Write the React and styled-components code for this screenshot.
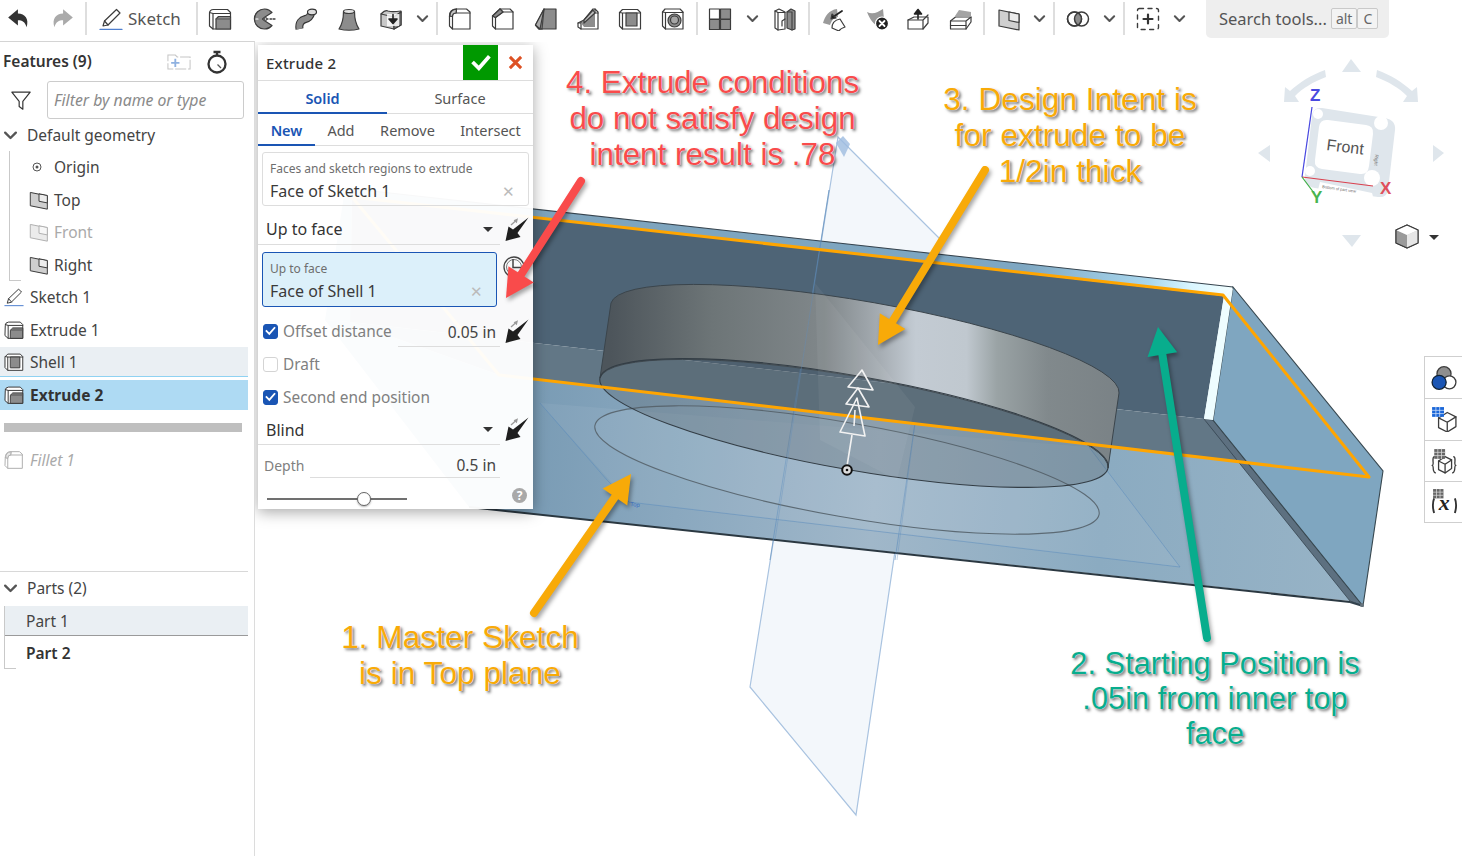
import React from 'react';
import styled, { createGlobalStyle } from 'styled-components';

const Global = createGlobalStyle`
  html, body { margin: 0; padding: 0; background: #fff; }
  body { font-family: "Noto Sans", "Open Sans", sans-serif; color: #3a3a3a; }
  * { box-sizing: border-box; }
`;

const Page = styled.div`
  width: 1462px; height: 856px; display: flex; flex-direction: column; overflow: hidden; background: #fff;
`;
const Toolbar = styled.div`
  height: 42px; flex: none; display: flex; align-items: flex-start; position: relative;
`;
const ToolBtn = styled.div`
  width: ${p => p.$w}px; height: 38px; flex: none; display: flex; align-items: center;
  justify-content: center; padding-right: ${p => p.$pr || 0}px;
`;
const Sep = styled.div`
  width: 2px; height: 33px; margin-top: 2px; background: #dedede; flex: none; margin-left: ${p => p.$ml || 0}px;
`;
const SketchBtn = styled.div`
  width: 109px; height: 38px; flex: none; display: flex; align-items: center; gap: 5px; padding: 0 0 1px 12px;
  font-size: 17px; color: #555;
`;
const Search = styled.div`
  width: 183px; height: 38px; margin-left: 19px; background: #eeeeee; border-radius: 0 0 5px 5px;
  display: flex; align-items: center; padding: 0 0 1px 13px; font-size: 16.5px; color: #555; flex: none; white-space: nowrap;
`;
const Kbd = styled.span`
  height: 21px; padding: 0 4px; border: 1px solid #c9c9c9; background: #f3f3f3; border-radius: 2px;
  font-size: 14px; line-height: 19px; color: #666; margin-left: ${p => p.$ml || 0}px; min-width: 21px; text-align: center;
`;
const Main = styled.div`
  flex: 1; display: flex; min-height: 0;
`;
const Sidebar = styled.aside`
  width: 255px; flex: none; border-right: 1px solid #dcdcdc; border-top: 1px solid #d4d4d4; margin-top: -1px;
  display: flex; flex-direction: column; font-size: 15.5px; background: #fff;
`;
const SideHeader = styled.div`
  height: 39px; display: flex; align-items: center; padding: 0 25px 0 3px; flex: none;
`;
const SideTitle = styled.div`
  font-weight: 600; font-size: 15.5px; color: #333; flex: 1; padding-bottom: 2px;
`;
const FilterRow = styled.div`
  height: 38px; display: flex; align-items: center; flex: none; padding-left: 10px;
`;
const FilterInput = styled.div`
  width: 197px; height: 38px; margin-left: 15px; border: 1px solid #ccc; border-radius: 3px; padding-left: 6px;
  display: flex; align-items: center; font-style: italic; color: #8a8a8a; font-size: 15.8px;
`;
const TreeRow = styled.div`
  width: 248px; height: ${p => p.$h || 32.5}px; display: flex; align-items: center; flex: none;
  padding-left: ${p => p.$pl ?? 4}px; gap: ${p => p.$gap ?? 6}px; padding-bottom: ${p => p.$pb || 0}px;
  background: ${p => p.$bg || 'transparent'};
  color: ${p => p.$color || '#444'};
  font-weight: ${p => p.$weight || 400};
  font-style: ${p => p.$italic ? 'italic' : 'normal'};
  border-bottom: ${p => p.$line ? `1px solid ${p.$line}` : 'none'};
  margin-bottom: ${p => p.$mb || 0}px;
`;
const Guide = styled.div`
  margin-left: ${p => p.$ml}px; border-left: 1px solid #c9c9c9; display: flex; flex-direction: column;
  width: ${p => 248 - p.$ml}px; position: relative;
  &::after { content: ""; position: absolute; left: 0; bottom: 0; width: 11px; height: 1px; background: #c9c9c9; }
`;
const SubRow = styled(TreeRow)`
  width: 100%;
`;
const Rollback = styled.div`
  width: 238px; height: 9px; margin: 13px 0 12px 4px; background: #bfbfbf; flex: none;
`;
const Divider = styled.div`
  width: 248px; height: 1px; background: #d8d8d8; margin-top: 94.5px; flex: none;
`;

const Viewport = styled.main`
  flex: 1; position: relative; overflow: hidden; background: #fff; margin-top: 0;
`;
const Canvas = styled.svg`
  position: absolute; left: 0; top: 0; width: 1207px; height: 814px; display: block;
  z-index: ${p => p.$z || 0}; pointer-events: none;
`;
const Note = styled.div`
  position: absolute; left: ${p => p.$x - 255}px; top: ${p => p.$y - 42}px; transform: translateX(-50%);
  z-index: 4; white-space: pre; text-align: center; font-family: "Liberation Sans", Arial, sans-serif;
  font-size: ${p => p.$fs}px; line-height: ${p => p.$lh || 36}px; color: ${p => p.$c};
  text-shadow: 0 0 1px #fff, 0 0 2px #fff, 2px 2px 3px rgba(0,0,0,.55), 1px 1px 1px rgba(0,0,0,.2);
`;
const Dialog = styled.section`
  position: absolute; left: 3px; top: 3px; width: 275px; height: 464px; z-index: 2;
  background: rgba(255,255,255,.965); box-shadow: 0 3px 14px rgba(0,0,0,.35);
  display: flex; flex-direction: column; font-size: 16px;
`;
const DialogHead = styled.div`
  height: 36px; display: flex; align-items: center; border-bottom: 1px solid #ddd; flex: none;
`;
const DialogTitle = styled.div`
  flex: 1; padding-left: 8px; font-weight: 500; font-size: 15px; color: #333; letter-spacing: .2px;
`;
const Accept = styled.div`
  width: 35px; height: 35px; background: #009900; display: flex; align-items: center; justify-content: center;
`;
const Cancel = styled.div`
  width: 35px; height: 35px; display: flex; align-items: center; justify-content: center;
`;
const Tabs = styled.div`
  height: ${p => p.$h}px; display: flex; border-bottom: 1px solid #ddd; flex: none; font-size: 14.5px;
`;
const Tab = styled.div`
  width: ${p => p.$w}px; flex: none; display: flex; align-items: center; justify-content: center;
  padding-top: 2px;
  color: ${p => p.$on ? '#1a55b4' : '#555'};
  font-weight: ${p => p.$on ? 600 : 400};
  border-bottom: 2px solid ${p => p.$on ? '#1a55b4' : 'transparent'};
  margin-bottom: -1px;
`;
const Field = styled.div`
  width: ${p => p.$w}px; height: ${p => p.$h || 54}px; border-radius: 3px; padding: 8px 8px 0 7px; flex: none; position: relative;
  border: 1px solid ${p => p.$on ? '#1a55b4' : '#ddd'};
  background: ${p => p.$on ? '#dcf0fa' : 'transparent'};
`;
const FieldLabel = styled.div`
  font-size: 12px; line-height: 16px; color: #6e6e6e; white-space: nowrap;
`;
const FieldValue = styled.div`
  display: flex; justify-content: space-between; align-items: center; margin-top: 4px;
  font-size: 16px; line-height: 20px; color: #3a3a3a;
`;
const Clear = styled.span`
  color: #bbb; font-size: 15px; line-height: 1; padding-right: 5px; font-weight: 300;
`;
const FieldWrap = styled.div`
  padding: ${p => p.$pt}px 0 0 4px; display: flex; align-items: flex-start; gap: 4px; flex: none;
`;
const Row = styled.div`
  height: ${p => p.$h}px; display: flex; flex: none; align-items: center; gap: 5px; padding-top: ${p => p.$pt || 0}px;
`;
const RowBody = styled.div`
  width: 242px; height: 100%; display: flex; align-items: center; flex: none; padding: 2px 7px 0 8px;
  border-bottom: ${p => p.$line ? '1px solid #ddd' : 'none'};
  justify-content: space-between; color: #333;
`;
const Caret = styled.span`
  width: 0; height: 0; border-left: 5px solid transparent; border-right: 5px solid transparent; border-top: 5px solid #333;
`;
const CheckBody = styled.div`
  width: 242px; height: 100%; display: flex; align-items: center; flex: none; padding-left: 5px; gap: 5px; color: #808080;
  font-size: 15.4px; white-space: nowrap; padding-top: 1px;
`;
const DepthBody = styled.div`
  width: 242px; height: 100%; display: flex; align-items: center; flex: none;
`;
const Box = styled.span`
  width: 15px; height: 15px; border-radius: 3px; flex: none; display: flex; align-items: center; justify-content: center;
  background: ${p => p.$on ? '#1a55b4' : '#fff'}; border: 1px solid ${p => p.$on ? '#1a55b4' : '#d4d4d4'};
`;
const Distance = styled.div`
  margin-left: auto; width: ${p => p.$w}px; height: 100%; border-bottom: 1px solid #ddd; display: flex; align-items: center;
  justify-content: flex-end; padding-right: 4px; color: #444; font-size: 15.5px; padding-top: ${p => p.$pt}px;
`;
const DepthLabel = styled.div`
  font-size: 14px; color: #808080; padding-left: 6px; padding-top: 8px; flex: 1;
`;
const SliderRow = styled.div`
  height: 31px; display: flex; align-items: center; padding: 8px 6px 0 9px; justify-content: space-between; flex: none;
`;
const Track = styled.div`
  width: 140px; height: 2px; background: #707070; position: relative; margin-top: 2px;
`;
const Thumb = styled.div`
  position: absolute; top: -6px; width: 14px; height: 14px; border-radius: 50%; background: #fff; border: 1px solid #666;
  box-shadow: 0 1px 2px rgba(0,0,0,.3); left: ${p => p.$l}px;
`;
const Help = styled.div`
  width: 15px; height: 15px; border-radius: 50%; background: #a9a9a9; color: #fff; font-size: 12px; font-weight: 700;
  display: flex; align-items: center; justify-content: center; line-height: 1; margin-top: -4px;
`;
const SideTools = styled.div`
  position: absolute; right: 0; top: 314px; width: 38px; z-index: 3; background: #fff; border: 1px solid #cfcfcf; border-right: none;
  display: flex; flex-direction: column;
`;
const SideTool = styled.div`
  height: 41.25px; display: flex; align-items: center; justify-content: center; padding-left: 1px;
  & + & { border-top: 1px solid #cfcfcf; }
`;
const Spacer = styled.span`
  width: 14px; flex: none;
`;
const Faded = styled.span`
  opacity: .4; display: flex;
`;
const ClockSlot = styled.span`
  margin-left: 1px; margin-top: 3px;
`;

/* ---------- icons ---------- */
const G = '#8c8c8c';
const Ico = ({ s = 24, o = 1, children }) => (
  <svg viewBox="0 0 24 24" width={s} height={s} fill="none" stroke="#3c3c3c" strokeWidth="1.2" strokeLinejoin="round" strokeLinecap="round" style={{ opacity: o, flex: 'none', display: 'block' }}>{children}</svg>
);
const Undo = ({ c }) => (
  <svg viewBox="0 0 24 24" width="26" height="26" fill={c}><path d="M11 3 2 10.500 11 18v-4.800c4 0 6.400 1.300 8 6.300 2.500-7.500-1.500-12.500-8-12.500z" /></svg>
);
const Redo = ({ c }) => (
  <svg viewBox="0 0 24 24" width="26" height="26" fill={c}><path d="M13 3l9 7.500L13 18v-4.800c-4 0-6.400 1.300-8 6.300-2.500-7.500 1.500-12.500 8-12.500z" /></svg>
);
const Chevron = ({ s = 13, c = '#555' }) => (
  <svg viewBox="0 0 14 10" width={s} height={s * 10 / 14} fill="none" stroke={c} strokeWidth="2.2" strokeLinecap="round" strokeLinejoin="round" style={{ flex: 'none', display: 'block' }}><path d="M2 2.500 7 7.500 12 2.500" /></svg>
);
const SketchIco = ({ s = 24 }) => (
  <Ico s={s}>
    <path d="M4 19 5.500 14 17.500 2.500l3.500 3.500L9 18z" fill="#fff" />
    <path d="M5.500 14 9 18" />
    <path d="M1 22.400h22" stroke="#4f7fcf" strokeWidth="1.200" />
  </Ico>
);
const ExtrudeIco = ({ s = 24 }) => (
  <Ico s={s}>
    <path d="M1.500 6.500q0-4 4-4h14l3 3v16.500H5l-3.500-3z" fill="#fff" />
    <path d="M5 22V6.500h17.500M1.500 5.500 5 6.500" />
    <path d="M8 12l2.500-2.500h12V22H8z" fill={G} />
    <path d="M8 12h14.500" stroke="#555" />
  </Ico>
);
const ShellIco = ({ s = 24 }) => (
  <Ico s={s}>
    <path d="M1.500 5.500l3-3h15l3 3v16.500H4.500l-3-3z" fill="#fff" />
    <path d="M4.500 22V6h18M1.500 5.500 4.500 6" />
    <rect x="8" y="6" width="11" height="13" fill={G} />
  </Ico>
);
const RevolveIco = () => (
  <Ico>
    <path d="M20 5.500A10 10 0 1 0 20 18.500L13 14l-2.500-2 2.500-2z" fill={G} />
    <path d="M4 12h2" stroke="#fff" />
    <path d="M13 12h3M18 12h1.500M21 12h2" strokeWidth="1.300" />
    <circle cx="13.500" cy="12" r="1.300" fill="#fff" stroke="#555" />
  </Ico>
);
const SweepIco = () => (
  <svg viewBox="0 0 24 24" width="24" height="24" fill="none" strokeLinecap="butt" style={{ display: 'block' }}>
    <path d="M5.500 22c-1-6 2-9 6-10s5-3 6-7" stroke="#333" strokeWidth="8" />
    <path d="M5.500 22c-1-6 2-9 6-10s5-3 6-7" stroke={G} strokeWidth="5.800" />
    <ellipse cx="18" cy="5" rx="4.500" ry="2.800" fill="#ddd" stroke="#333" strokeWidth="1.200" />
  </svg>
);
const LoftIco = () => (
  <Ico>
    <path d="M6.500 4.500c0 7-1.500 13-4.500 17.500 6 1.500 14 1.500 20 0-3-4.500-4.500-10.500-4.500-17.500z" fill={G} />
    <ellipse cx="12" cy="4.500" rx="5.500" ry="2" fill="#e4e4e4" />
  </Ico>
);
const ThickenIco = () => (
  <Ico>
    <path d="M2 7c3-3 5-4 7-3 3 1 6 1 13 0v14l-7 4-13-3z" fill="#c8c8c8" />
    <path d="M2 7l13 3v12M15 10l7-5" />
    <path d="M15 10l7-5v13l-7 4z" fill={G} />
    <rect x="8" y="7" width="12" height="12" fill="#fff" stroke="none" opacity=".8" />
    <path d="M14 7.500v7M10 12l4 4.500 4-4.500z" fill="#222" stroke="#222" strokeWidth="1.600" />
  </Ico>
);
const FilletIco = ({ s = 24 }) => (
  <Ico s={s}>
    <path d="M1.500 9q0-7 7-7h10l3.500 3v17H4.500l-3-3z" fill="#fff" />
    <path d="M4.500 22V9q0-3 3.500-3h14M1.500 9l3 .500M8.500 2 8 6" />
    <path d="M2 9q0-6.500 6.500-6.800L8 6q-3.500 0-3.500 3.500z" fill="#c4c4c4" />
  </Ico>
);
const ChamferIco = () => (
  <Ico>
    <path d="M1.500 9 9 2h10l3 3v17H4.500l-3-3z" fill="#fff" />
    <path d="M4.500 22V10.500L12 5h10M1.500 9l3 1.500M9 2l3 3" />
    <path d="M1.500 9 9 2l3 3-7.500 5.500z" fill={G} />
  </Ico>
);
const DraftIco = () => (
  <Ico>
    <path d="M1.500 18 10 2h12v20H5z" fill={G} />
    <path d="M10 2 8 22" stroke="#444" />
    <path d="M1.500 18 5 22h3" />
    <path d="M10 2 1.500 18 6 22z" fill="#aaa" />
  </Ico>
);
const RibIco = () => (
  <Ico>
    <path d="M2 16v4l3 2h17V5l-3-3h-2L8 13z" fill="#fff" />
    <path d="M19 6 8 15H5v7M2 16h3M19 2v4h3" />
    <path d="M19 6v14H8L5 16l3-1z" fill={G} stroke="none" />
    <path d="M8 13 17 3l2 3L8 16z" fill="#bbb" />
  </Ico>
);
const HoleIco = () => (
  <Ico>
    <path d="M1.500 5l2.500-3h15l3 3v17H4.500l-3-3z" fill="#fff" />
    <path d="M4.500 22V5.500H22M1.500 5 4.500 5.500" />
    <circle cx="13.500" cy="13.500" r="6.500" fill={G} />
    <circle cx="13.500" cy="13" r="4" fill="#a6a6a6" />
  </Ico>
);
const PatternIco = () => (
  <Ico>
    <rect x="1.500" y="2" width="10" height="10" fill="#fff" />
    <rect x="12.500" y="2" width="10" height="10" fill={G} />
    <rect x="1.500" y="12.500" width="10" height="10" fill={G} />
    <rect x="12.500" y="12.500" width="10" height="10" fill={G} />
  </Ico>
);
const MirrorIco = () => (
  <Ico>
    <path d="M2 4l4-2 6 3v17l-7 1-3-2z" fill="#fff" />
    <path d="M5 5.500V23M2 4l3 1.500M12 12l-3 2v5" />
    <path d="M14 5l4-3 4 2v18l-3 1-5-2z" fill={G} />
    <path d="M19 5v18M14 5l5 0" stroke="#444" />
    <path d="M5 5.500l7 0" />
  </Ico>
);
const MoveFaceIco = () => (
  <Ico>
    <path d="M1 16c2-7 6-13 14-14l1 8c-4 0-6 3-8 8z" fill="#9a9a9a" stroke="none" />
    <path d="M10 21c0-5 3-8 8-9l5 8c-3 1-5 2-6 4z" fill="#fff" />
    <path d="M20 4 11 10" stroke="#222" strokeWidth="1.800" />
    <path d="M9 12l1-5 4 4z" fill="#222" />
  </Ico>
);
const DeleteFaceIco = () => (
  <Ico>
    <path d="M1 5c6 3 11 0 16-3l1 10c-4 1-6 4-7 7-3-2-7-6-10-14z" fill="#9a9a9a" stroke="none" />
    <circle cx="16" cy="16.500" r="6.500" fill="#222" stroke="#fff" />
    <path d="M13.500 14l5 5M18.500 14l-5 5" stroke="#fff" strokeWidth="1.800" />
  </Ico>
);
const FaceUpIco = () => (
  <Ico>
    <path d="M2 13l6-3h14v6l-5 6H2z" fill="#fff" />
    <path d="M2 13h15v9M17 13l5-5" />
    <path d="M12 12V3M8.500 7 12 2.500 15.500 7z" fill="#222" stroke="#222" strokeWidth="1.600" />
  </Ico>
);
const StackIco = () => (
  <Ico>
    <path d="M1.500 14l5-4h15.500v5l-5 7H1.500z" fill="#fff" />
    <path d="M1.500 14h15.500v8M17 14l5-4" />
    <path d="M1.500 18.500H17" />
    <path d="M6 9l4-6 12 2v5z" fill="#a4a4a4" stroke="none" />
  </Ico>
);
const PlaneIco = ({ s = 20, o = 1 }) => (
  <Ico s={s} o={o}>
    <path d="M2 3l20 4v16L2 19z" fill="#cfcfcf" />
    <path d="M12 5v8.500L22 15.500V7z" fill="#ececec" />
  </Ico>
);
const BooleanIco = () => (
  <svg viewBox="0 0 24 24" width="24" height="24" fill="none" stroke="#3c3c3c" strokeWidth="1.500" style={{ display: 'block' }}>
    <circle cx="8.500" cy="12" r="7" fill="#fff" />
    <path d="M12 6a7 7 0 0 1 0 12 7 7 0 0 1 0-12z" fill={G} stroke="none" />
    <circle cx="15.500" cy="12" r="7" />
    <circle cx="8.500" cy="12" r="7" />
  </svg>
);
const PlusBoxIco = () => (
  <Ico>
    <rect x="1.500" y="1.500" width="21" height="21" rx="2" strokeWidth="1.400" strokeDasharray="4 4.500" />
    <path d="M12 7.500v9M7.500 12h9" strokeWidth="2.200" stroke="#333" />
  </Ico>
);
const Funnel = () => (
  <svg viewBox="0 0 24 24" width="22" height="22" fill="none" stroke="#333" strokeWidth="1.300" strokeLinejoin="round"><path d="M2 3.500h20L14 13.500V22l-4-3v-5.500z" /></svg>
);
const FolderPlus = () => (
  <svg viewBox="0 0 26 20" width="24" height="19" fill="none" stroke="#c5c5c5" strokeWidth="1.100"><path d="M1 3h8l2 2h14v13H1z" strokeDasharray="12 2" /><path d="M9 7v9M4.500 11.500h9" stroke="#8fb1e0" strokeWidth="2" /></svg>
);
const Stopwatch = () => (
  <svg viewBox="0 0 24 24" width="24" height="24" fill="none" stroke="#333" strokeWidth="2.300"><circle cx="12" cy="14" r="8.500" /><path d="M8.500 2h7M12 2v3" /><path d="M12.500 14.500 16 18" strokeWidth="1.300" stroke="#555" /></svg>
);
const OriginIco = () => (
  <svg viewBox="0 0 12 12" width="12" height="12" fill="none" stroke="#555" strokeWidth="1"><circle cx="6" cy="6" r="4" /><circle cx="6" cy="6" r="1.500" fill="#555" stroke="none" /></svg>
);
const FlipIco = () => (
  <svg viewBox="0 0 24 24" width="24" height="24" style={{ flex: 'none', display: 'block' }}>
    <path d="M0.500 24 3.500 9.500 8 12.500 23.500 0.500 12.500 16 15.500 20z" fill="#1f1f1f" />
    <path d="M6 8 10.500 4" stroke="#9a9a9a" strokeWidth="1.400" />
    <path d="M13 1.200 11.800 6.300 8.600 3.200z" fill="#9a9a9a" />
  </svg>
);
const ClockIco = () => (
  <svg viewBox="0 0 24 24" width="24" height="24" fill="none" stroke="#444" strokeWidth="1.300" style={{ flex: 'none', display: 'block' }}>
    <circle cx="12" cy="12" r="10" />
    <circle cx="12" cy="12" r="7.500" strokeWidth=".7" />
    <path d="M11 4v8.500h8" strokeWidth="1.500" />
  </svg>
);
const Tick = ({ s = 11, c = '#fff', w = 2.4 }) => (
  <svg viewBox="0 0 14 12" width={s} height={s * 12 / 14} fill="none" stroke={c} strokeWidth={w} strokeLinecap="square"><path d="M2 6.500 5.500 10 12 2.500" /></svg>
);
const Cross = () => (
  <svg viewBox="0 0 16 16" width="15" height="15" stroke="#dd5124" strokeWidth="3.200" strokeLinecap="butt"><path d="M2 2l12 12M14 2 2 14" /></svg>
);
const AppearanceIco = () => (
  <Ico s={26}>
    <circle cx="12" cy="8" r="6.500" fill="#8e8e8e" />
    <circle cx="17" cy="16" r="6" fill="#fff" />
    <circle cx="7.500" cy="16" r="6.500" fill="#1a55b4" stroke="#123" />
  </Ico>
);
const TableCubeIco = () => (
  <Ico s={26}>
    <path d="M7 11l8-5 8 4v9l-8 5-8-4z" fill="#fff" />
    <path d="M7 11l8 4 8-5M15 15v9" />
    <rect x="1" y="1" width="11" height="9" fill="#1a66d8" stroke="none" />
    <path d="M1 4h11M1 7h11M4.500 1v9M8 1v9" stroke="#cfe0fa" strokeWidth=".7" />
  </Ico>
);
const BraceCubeIco = () => (
  <Ico s={26}>
    <path d="M3 8C1 9 2 12 2 14s-1 2-1 2 1 0 1 2 0 4 2 5" />
    <path d="M21 8c2 1 1 4 1 6s1 2 1 2-1 0-1 2 0 4-2 5" />
    <path d="M7 12l6-4 6 3v8l-6 4-6-3z" fill="#fff" />
    <path d="M7 12l6 3 6-4M13 15v8" />
    <rect x="3" y="1" width="10" height="9" fill="#666" stroke="none" />
    <path d="M3 4h10M3 7h10M6.300 1v9M9.700 1v9" stroke="#ddd" strokeWidth=".7" />
  </Ico>
);
const VarIco = () => (
  <svg viewBox="0 0 26 26" width="27" height="27" fill="none" stroke="#333" style={{ display: 'block' }}>
    <path d="M3 10c-1.500 4-1.500 9 0 14M23 10c1.500 4 1.500 9 0 14" strokeWidth="1.800" />
    <rect x="2" y="1" width="10" height="9" fill="#666" stroke="none" />
    <path d="M2 4h10M2 7h10M5.300 1v9M8.700 1v9" stroke="#ddd" strokeWidth=".7" />
    <text x="7.500" y="21.500" fontFamily="Liberation Serif, serif" fontStyle="italic" fontWeight="700" fontSize="21" fill="#222" stroke="none">x</text>
  </svg>
);

/* ---------- viewport drawings ---------- */
const Model = () => (
  <Canvas $z={0} viewBox="255 42 1207 814" xmlns="http://www.w3.org/2000/svg">
    <defs>
      <linearGradient id="floor" gradientUnits="userSpaceOnUse" x1="533" y1="450" x2="1350" y2="520">
        <stop offset="0" stopColor="#7a9cb5" />
        <stop offset=".18" stopColor="#8aa8bf" />
        <stop offset=".42" stopColor="#a0b7c9" />
        <stop offset=".7" stopColor="#8babc1" />
        <stop offset="1" stopColor="#97b3c6" />
      </linearGradient>
      <linearGradient id="rim" gradientUnits="userSpaceOnUse" x1="533" y1="210" x2="1233" y2="290">
        <stop offset="0" stopColor="#7ea4bd" />
        <stop offset=".7" stopColor="#7ea7c2" />
        <stop offset=".88" stopColor="#a9d7ee" />
        <stop offset=".94" stopColor="#d9f6ff" />
        <stop offset="1" stopColor="#f4ffff" />
      </linearGradient>
      <linearGradient id="puck" gradientUnits="userSpaceOnUse" x1="611" y1="0" x2="1119" y2="0">
        <stop offset="0" stopColor="#4d555b" />
        <stop offset=".2" stopColor="#6d7577" />
        <stop offset=".42" stopColor="#80878a" />
        <stop offset=".53" stopColor="#a6adb3" />
        <stop offset=".6" stopColor="#c3cbd3" />
        <stop offset=".7" stopColor="#c0c8cf" />
        <stop offset=".76" stopColor="#9aa3a5" />
        <stop offset=".86" stopColor="#81898c" />
        <stop offset="1" stopColor="#7a8286" />
      </linearGradient>
    </defs>
    {/* vertical plane behind the part */}
    <path d="M838 137 941 240 856 815 750 687z" fill="#f3f7fb" stroke="#a9c3e0" strokeWidth="1.200" />
    <path d="M836 143l7-7 7 8-6 13z" fill="#9dbbe0" opacity=".8" />
    {/* silhouette */}
    <path d="M345 188 1233 287 1224 296 352 197z" fill="url(#rim)" />
    <path d="M345 188 352 197 350 322 325 320z" fill="#7ea4bd" />
    <path d="M352 197 1224 296 1204 419 350 322z" fill="#4e6476" />
    <path d="M350 322 1204 419 1248 463 499 375z" fill="#627786" />
    <path d="M325 320 350 322 499 375 1248 463 1350 601 469 507z" fill="url(#floor)" />
    <path d="M1204 419 1213 420 1363 606 1350 601z" fill="#5d7080" stroke="#33424e" strokeWidth=".8" />
    <path d="M1233 287 1383 471 1363 606 1213 420z" fill="#7fa6c0" stroke="#37474f" strokeWidth="1.100" />
    <path d="M1224 296 1233 288 1213 420 1204 419z" fill="#eefdff" />
    <path d="M345 188 1233 287" stroke="#36444f" strokeWidth="1.100" />
    <path d="M469 507 1350 602" stroke="#2b3841" strokeWidth="2" />
    <path d="M1363 606 1350 602" stroke="#33424e" strokeWidth="2" />
    <circle cx="1362" cy="605" r="2" fill="#66737d" />
    {/* plane outlines seen through the part */}
    <path d="M829 190 770 560M915 423 895 560M1089 447 1180 567 629 502M540 403 607 480 629 502" stroke="#5f8dbd" strokeWidth="1" opacity=".6" fill="none" />
    <path d="M1089 447 1180 567 629 502 540 403z" fill="#fff" opacity=".06" />
    {/* sketch ellipse */}
    <ellipse cx="847" cy="470" rx="256" ry="47" transform="rotate(10 847 470)" fill="#fff" fillOpacity=".04" stroke="#5c6a74" strokeWidth="1.100" />
    {/* puck */}
    <path d="M611 303A258 47 10 0 1 1119 393L1108 468A258 47 10 0 0 600 378z" fill="url(#puck)" stroke="#3b454c" strokeWidth="1" />
    <ellipse cx="854" cy="423" rx="258" ry="47" transform="rotate(10 854 423)" fill="#4e5860" fillOpacity=".3" stroke="#333d45" strokeWidth="1.100" />
    <path d="M815 283 915 407 897 480 820 440z" fill="#fff" opacity=".05" />
    <path d="M829 190 775 540M915 423 897 560" stroke="#5f8dbd" strokeWidth="1" opacity=".35" fill="none" />
    {/* selection outline */}
    <path d="M352 197 1223 295 1369 477 499 375z" fill="none" stroke="#ffa500" strokeWidth="3" strokeLinejoin="round" />
    {/* manipulator */}
    <g fill="none" stroke="#f2f2f2" strokeWidth="1.600" strokeLinejoin="round">
      <path d="M847 466 852 435M855 410 854 426" />
      <path d="M862 370 848 387 873 390z" />
      <path d="M858 388 846 404 869 407z" />
      <path d="M857 398 840 432 865 436z" />
    </g>
    <circle cx="847" cy="470" r="4.800" fill="#ddd" stroke="#111" strokeWidth="2" />
    <circle cx="847" cy="470" r="1.300" fill="#111" />
    <text x="630" y="506" fontFamily="Liberation Sans, sans-serif" fontSize="6" fill="#3a6fc4" transform="rotate(6 630 506)">Top</text>
    {/* view cube */}
    <g fill="#dfe6ec">
      <path d="M1351 59 1342 72 1361 72z" />
      <path d="M1258 153 1270 145 1270 162z" />
      <path d="M1444 153 1433 145 1433 162z" />
      <path d="M1352 247 1342 235 1361 235z" />
      <path d="M1325 70 1326 77C1313 82 1303 88 1295 96L1299 102H1284L1285 87 1290 91C1300 82 1311 75 1325 70z" />
      <path d="M1377 70 1376 77C1389 82 1399 88 1407 96L1403 102H1418L1417 87 1412 91C1402 82 1391 75 1377 70z" />
      <path d="M1322 108 1385 118Q1396 120 1395 130L1388 190Q1387 198 1378 197L1315 188Q1304 186 1305 176L1312 116Q1313 107 1322 108z" />
    </g>
    <path d="M1328 120 1366 125Q1374 126 1373 134L1369 166Q1368 175 1360 174L1322 169Q1314 168 1315 160L1319 127Q1320 119 1328 120z" fill="#fff" />
    <circle cx="1381" cy="123" r="7" fill="#fff" />
    <circle cx="1318" cy="114" r="5" fill="#fff" />
    <circle cx="1310" cy="171" r="5" fill="#fff" />
    <circle cx="1372" cy="178" r="8" fill="#fff" />
    <text x="1326" y="150" fontFamily="Liberation Sans, sans-serif" fontSize="16" fill="#555" transform="rotate(7 1326 150)">Front</text>
    <text x="1385" y="165" fontFamily="Liberation Sans, sans-serif" fontSize="5" fill="#777" transform="rotate(95 1385 155)">Right</text>
    <path d="M1320 182 1372 193 1374 200 1318 190z" fill="#fff" />
    <text x="1322" y="188" fontFamily="Liberation Sans, sans-serif" fontSize="4" fill="#666" transform="rotate(8 1322 188)">Bottom of part view</text>
    <path d="M1302 177 1312 107" stroke="#4646e0" strokeWidth="1.200" />
    <path d="M1302 177 1373 186" stroke="#d9404e" strokeWidth="1.200" />
    <path d="M1302 177 1314 193" stroke="#3fae48" strokeWidth="1.200" />
    <g fontFamily="Liberation Sans, sans-serif" fontWeight="700" fontSize="17">
      <text x="1310" y="101" fill="#4a4ae0">Z</text>
      <text x="1380" y="194" fill="#e0505c">X</text>
      <text x="1311" y="203" fill="#48b450">Y</text>
    </g>
    <g stroke="#3a3a3a" strokeWidth="1.100" strokeLinejoin="round">
      <path d="M1396 230 1407 225 1418 230 1418 243 1407 248 1396 243z" fill="#bbb" />
      <path d="M1396 230 1407 235 1407 248 1396 243z" fill="#9a9a9a" stroke="none" />
      <path d="M1407 235 1418 230 1418 243 1407 248z" fill="#e6e6e6" stroke="none" />
      <path d="M1396 230 1407 225 1418 230 1407 235z" fill="#fff" stroke="none" />
      <path d="M1396 230 1407 225 1418 230 1418 243 1407 248 1396 243z" fill="none" />
    </g>
    <path d="M1429 235h10l-5 5z" fill="#333" />
  </Canvas>
);

const Arrow = ({ t, h, hl = 28, hw = 30, c, w = 8 }) => {
  const [x1, y1] = t, [x2, y2] = h;
  const L = Math.hypot(x2 - x1, y2 - y1), ux = (x2 - x1) / L, uy = (y2 - y1) / L;
  const bx = x2 - ux * hl, by = y2 - uy * hl, nx = -uy * hw / 2, ny = ux * hw / 2;
  return (
    <g>
      <path d={`M${x1} ${y1}L${bx + ux * 2} ${by + uy * 2}`} stroke={c} strokeWidth={w} strokeLinecap="round" />
      <path d={`M${x2} ${y2}L${bx + nx} ${by + ny}L${bx - nx} ${by - ny}z`} fill={c} />
    </g>
  );
};
const Arrows = () => (
  <Canvas $z={3} viewBox="255 42 1207 814" style={{ filter: 'drop-shadow(2px 3px 2px rgba(0,0,0,.35))' }}>
    <Arrow t={[581, 181]} h={[506, 298]} c="#f94b4b" />
    <Arrow t={[985, 170]} h={[878, 345]} c="#f8aa08" />
    <Arrow t={[534, 613]} h={[631, 474]} c="#f8aa08" />
    <Arrow t={[1207, 638]} h={[1158, 327]} c="#08ad8d" />
  </Canvas>
);

export default function App() {
  return (
    <Page>
      <Global />
      <Toolbar>
        <ToolBtn $w={38}><Undo c="#333" /></ToolBtn>
        <ToolBtn $w={47}><Redo c="#aaa" /></ToolBtn>
        <Sep />
        <SketchBtn><SketchIco />Sketch</SketchBtn>
        <Sep />
        <ToolBtn $w={44}><ExtrudeIco /></ToolBtn>
        <ToolBtn $w={43}><RevolveIco /></ToolBtn>
        <ToolBtn $w={42}><SweepIco /></ToolBtn>
        <ToolBtn $w={43}><LoftIco /></ToolBtn>
        <ToolBtn $w={42}><ThickenIco /></ToolBtn>
        <ToolBtn $w={24} $pr={4}><Chevron /></ToolBtn>
        <Sep />
        <ToolBtn $w={44}><FilletIco /></ToolBtn>
        <ToolBtn $w={42}><ChamferIco /></ToolBtn>
        <ToolBtn $w={43}><DraftIco /></ToolBtn>
        <ToolBtn $w={42}><RibIco /></ToolBtn>
        <ToolBtn $w={42}><ShellIco /></ToolBtn>
        <ToolBtn $w={44}><HoleIco /></ToolBtn>
        <Sep $ml={1} />
        <ToolBtn $w={44}><PatternIco /></ToolBtn>
        <ToolBtn $w={20}><Chevron /></ToolBtn>
        <ToolBtn $w={46}><MirrorIco /></ToolBtn>
        <Sep />
        <ToolBtn $w={48}><MoveFaceIco /></ToolBtn>
        <ToolBtn $w={39}><DeleteFaceIco /></ToolBtn>
        <ToolBtn $w={42}><FaceUpIco /></ToolBtn>
        <ToolBtn $w={44}><StackIco /></ToolBtn>
        <Sep />
        <ToolBtn $w={48}><PlaneIco s={24} /></ToolBtn>
        <ToolBtn $w={12}><Chevron /></ToolBtn>
        <Sep $ml={8} />
        <ToolBtn $w={46}><BooleanIco /></ToolBtn>
        <ToolBtn $w={16}><Chevron /></ToolBtn>
        <Sep $ml={6} />
        <ToolBtn $w={46}><PlusBoxIco /></ToolBtn>
        <ToolBtn $w={16}><Chevron /></ToolBtn>
        <Search>Search tools...<Kbd $ml={4}>alt</Kbd><Kbd>C</Kbd></Search>
      </Toolbar>
      <Main>
        <Sidebar>
          <SideHeader>
            <SideTitle>Features (9)</SideTitle>
            <FolderPlus />
            <Spacer />
            <Stopwatch />
          </SideHeader>
          <FilterRow><Funnel /><FilterInput>Filter by name or type</FilterInput></FilterRow>
          <TreeRow $pl={3} $gap={9} $h={32}><Chevron s={15} />Default geometry</TreeRow>
          <Guide $ml={9}>
            <SubRow $pl={21} $gap={11}><OriginIco />Origin</SubRow>
            <SubRow $pl={19} $gap={5}><PlaneIco />Top</SubRow>
            <SubRow $pl={19} $gap={5} $color="#aaa"><PlaneIco o={.4} />Front</SubRow>
            <SubRow $pl={19} $gap={5}><PlaneIco />Right</SubRow>
          </Guide>
          <TreeRow><SketchIco s={20} />Sketch 1</TreeRow>
          <TreeRow $h={33.5}><ExtrudeIco s={20} />Extrude 1</TreeRow>
          <TreeRow $h={30} $bg="#eaeff3" $line="#8fd2f2" $mb={3}><ShellIco s={20} />Shell 1</TreeRow>
          <TreeRow $h={30} $bg="#aedaf3" $weight={700} $color="#333"><ExtrudeIco s={20} />Extrude 2</TreeRow>
          <Rollback />
          <TreeRow $color="#aaa" $italic><Faded><FilletIco s={20} /></Faded>Fillet 1</TreeRow>
          <Divider />
          <TreeRow $pl={3} $gap={9} $h={34} $pb={2}><Chevron s={15} />Parts (2)</TreeRow>
          <Guide $ml={4}>
            <SubRow $pl={21} $h={30} $bg="#eaeff3" $line="#9a9a9a">Part 1</SubRow>
            <SubRow $pl={21} $h={33} $weight={600} $color="#333">Part 2</SubRow>
          </Guide>
        </Sidebar>
        <Viewport>
          <Model />
          <Dialog>
            <DialogHead>
              <DialogTitle>Extrude 2</DialogTitle>
              <Accept><Tick s={20} w={2.6} /></Accept>
              <Cancel><Cross /></Cancel>
            </DialogHead>
            <Tabs $h={33}>
              <Tab $w={129} $on>Solid</Tab>
              <Tab $w={146}>Surface</Tab>
            </Tabs>
            <Tabs $h={32}>
              <Tab $w={57} $on>New</Tab>
              <Tab $w={52}>Add</Tab>
              <Tab $w={81}>Remove</Tab>
              <Tab $w={85}>Intersect</Tab>
            </Tabs>
            <FieldWrap $pt={6}>
              <Field $w={267}>
                <FieldLabel>Faces and sketch regions to extrude</FieldLabel>
                <FieldValue>Face of Sketch 1<Clear>✕</Clear></FieldValue>
              </Field>
            </FieldWrap>
            <Row $h={39} $pt={6}>
              <RowBody $line>Up to face<Caret /></RowBody>
              <FlipIco />
            </Row>
            <FieldWrap $pt={7}>
              <Field $w={235} $h={55} $on>
                <FieldLabel>Up to face</FieldLabel>
                <FieldValue>Face of Shell 1<Clear>✕</Clear></FieldValue>
              </Field>
              <ClockSlot><ClockIco /></ClockSlot>
            </FieldWrap>
            <Row $h={40} $pt={7}>
              <CheckBody><Box $on><Tick /></Box>Offset distance<Distance $w={102} $pt={3}>0.05 in</Distance></CheckBody>
              <FlipIco />
            </Row>
            <Row $h={33}><CheckBody><Box />Draft</CheckBody></Row>
            <Row $h={33}><CheckBody><Box $on><Tick /></Box>Second end position</CheckBody></Row>
            <Row $h={32}>
              <RowBody $line>Blind<Caret /></RowBody>
              <FlipIco />
            </Row>
            <Row $h={33}>
              <DepthBody>
                <DepthLabel>Depth</DepthLabel>
                <Distance $w={190} $pt={7}>0.5 in</Distance>
              </DepthBody>
            </Row>
            <SliderRow><Track><Thumb $l={90} /></Track><Help>?</Help></SliderRow>
          </Dialog>
          <Arrows />
          <Note $x={712.5} $y={65} $fs={31.4} $c="#f94b4b">{'4. Extrude conditions\ndo not satisfy design\nintent result is .78'}</Note>
          <Note $x={1070} $y={81} $fs={31.7} $c="#f8aa08">{'3. Design Intent is\nfor extrude to be\n1/2in thick'}</Note>
          <Note $x={460} $y={619} $fs={31.7} $c="#f8aa08">{'1. Master Sketch\nis in Top plane'}</Note>
          <Note $x={1215} $y={646} $fs={30.8} $lh={35} $c="#08ad8d">{'2. Starting Position is\n.05in from inner top\nface'}</Note>
          <SideTools>
            <SideTool><AppearanceIco /></SideTool>
            <SideTool><TableCubeIco /></SideTool>
            <SideTool><BraceCubeIco /></SideTool>
            <SideTool><VarIco /></SideTool>
          </SideTools>
        </Viewport>
      </Main>
    </Page>
  );
}
